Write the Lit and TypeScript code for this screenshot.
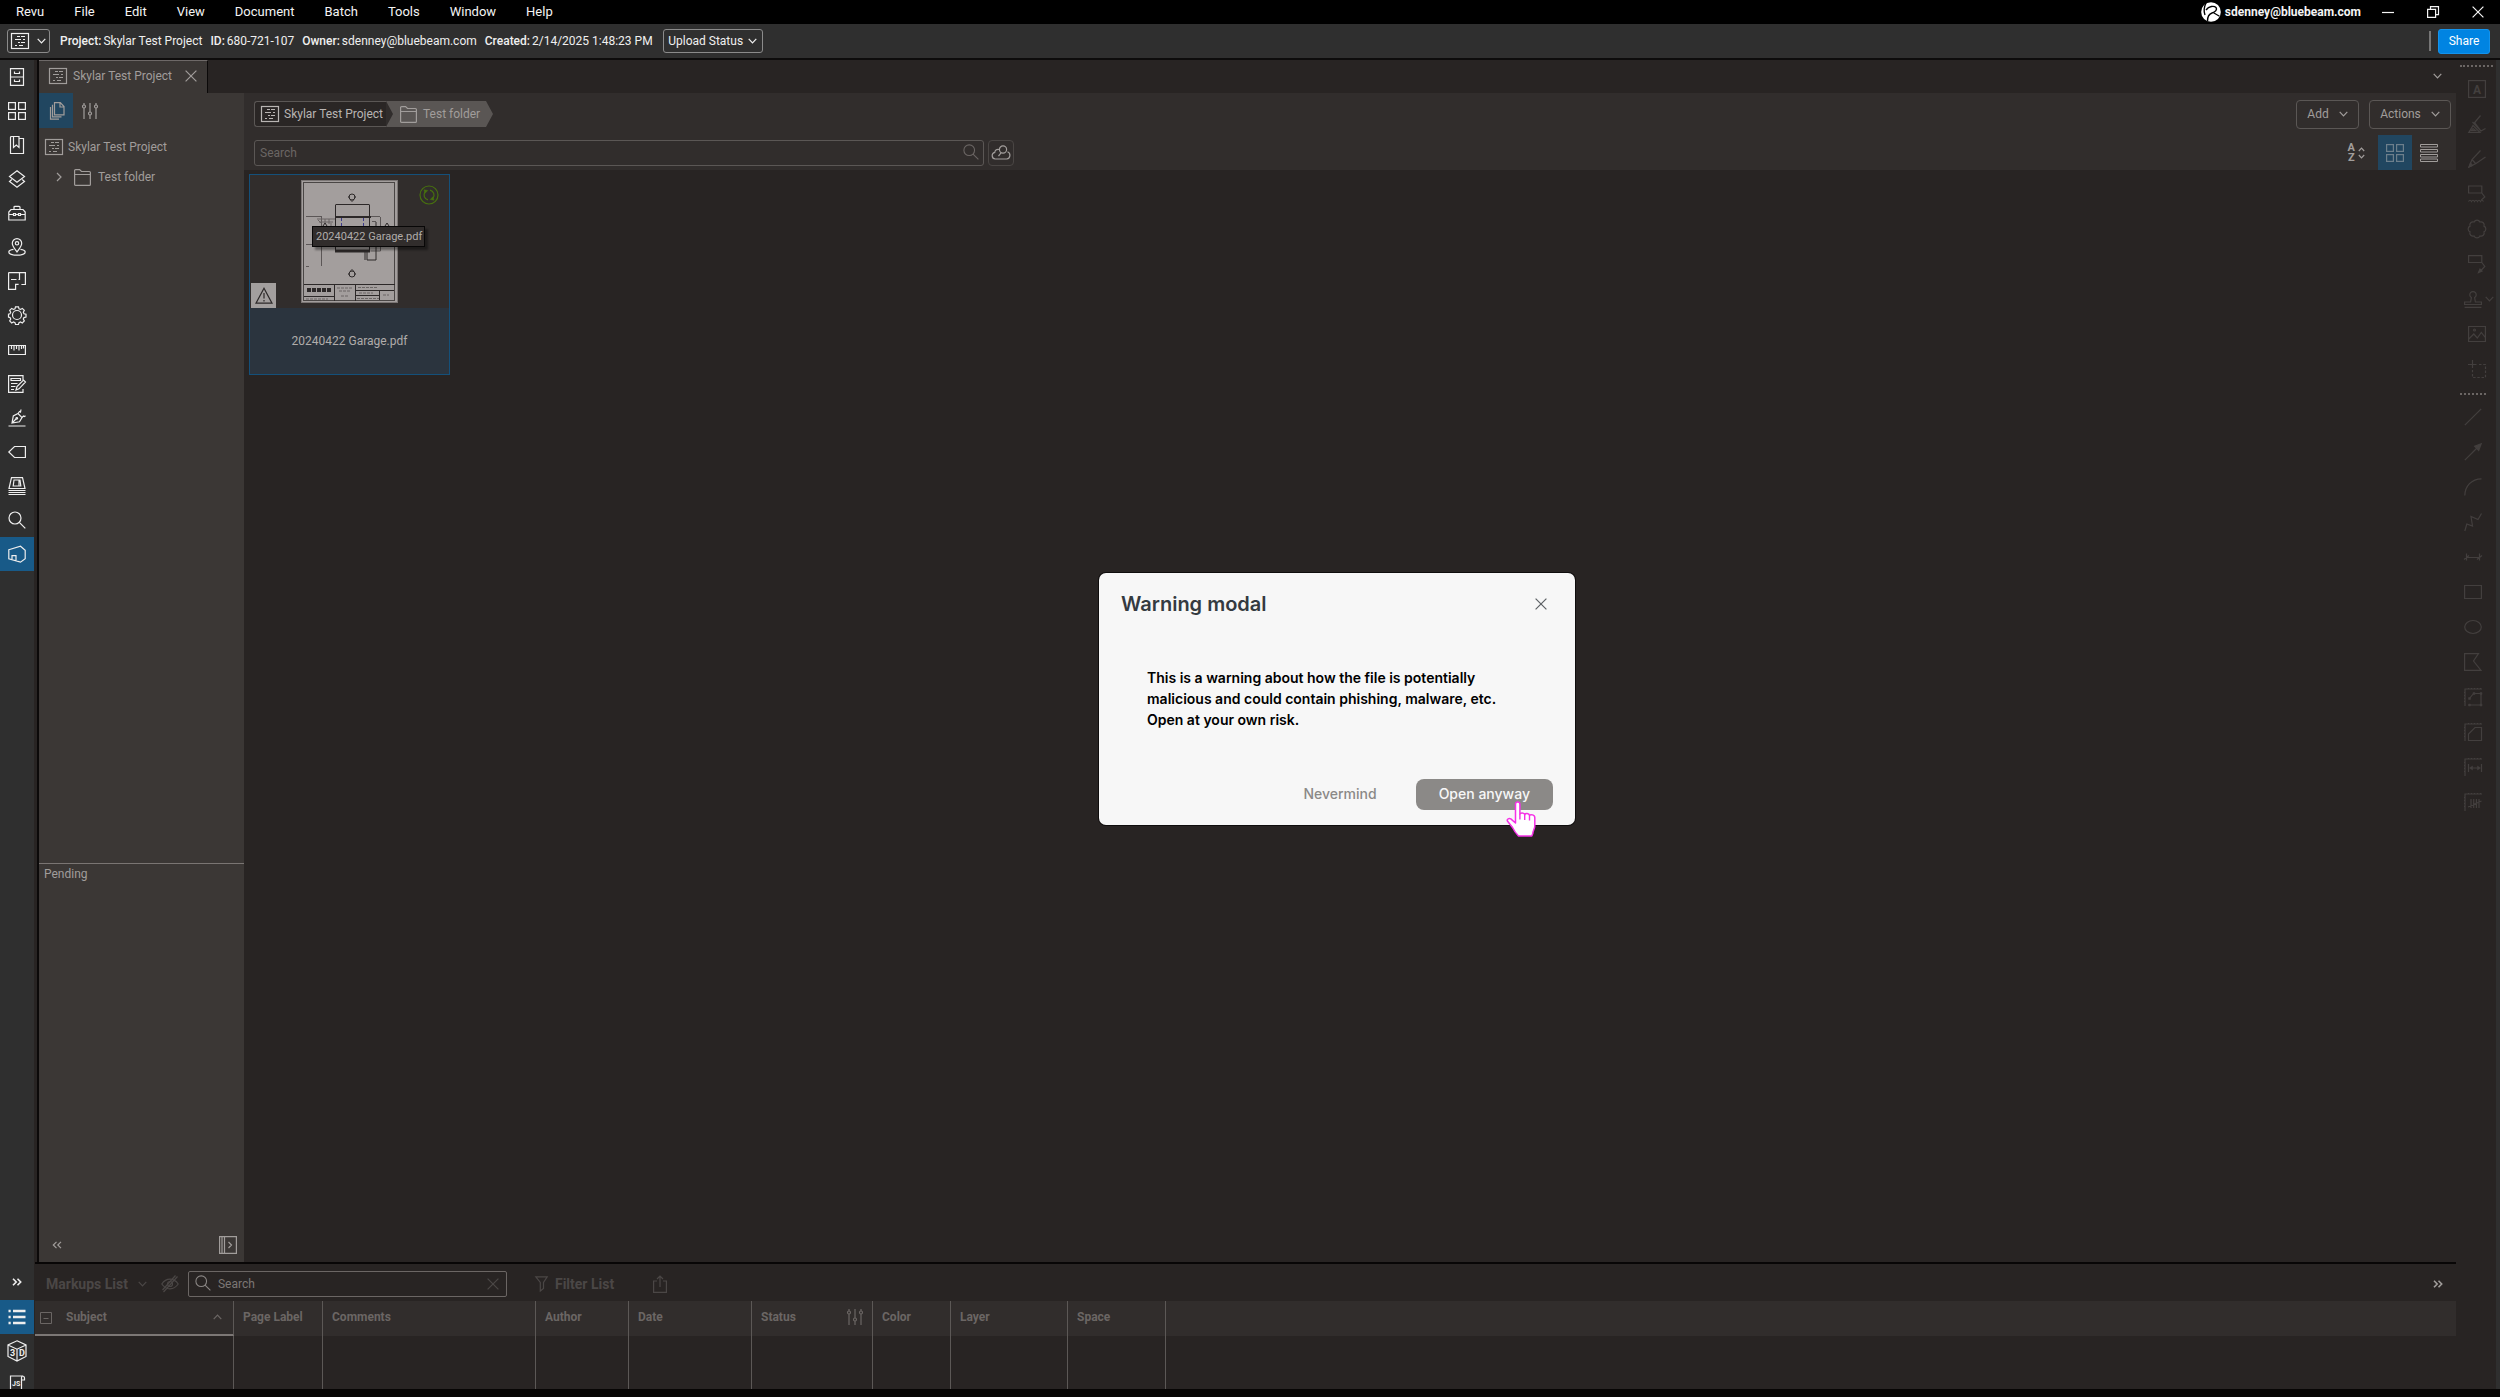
import { LitElement, html, css, svg, nothing } from "lit";
import type { SVGTemplateResult } from "lit";
import { customElement, property, state } from "lit/decorators.js";
import { classMap } from "lit/directives/class-map.js";

/* Line icons, each drawn on an 18 x 18 grid unless a box is given. */
type Glyph = { box?: [number, number]; art: SVGTemplateResult };

const AXES = svg`<path d="M1 18V1h17M0 4.500h1M0 7.500h1M0 10.500h1M0 13.500h1M4.500 0v1M7.500 0v1M10.500 0v1M13.500 0v1M16.500 0v1"/>`;

const GLYPHS: Record<string, Glyph> = {
  project: {
    box: [18, 16],
    art: svg`<rect x=".5" y=".5" width="17" height="15"/><path d="M6 3.500h3M10 3.500h4M4 6.500h6M12 6.500h2M7 9.500h2M10 9.500h4M4 12.500h2M8 12.500h4" stroke-width="1"/>`,
  },
  files: { art: svg`<path d="M2.500.6h13v16.800h-13zM2.500 9h13M6.500 3.500v2h5v-2M6.500 11.500v2h5v-2"/>` },
  grid: { art: svg`<rect x=".6" y=".6" width="6.800" height="6.800"/><rect x="10.600" y=".6" width="6.800" height="6.800"/><rect x=".6" y="10.600" width="6.800" height="6.800"/><rect x="10.600" y="10.600" width="6.800" height="6.800"/>` },
  bookmark: { art: svg`<path d="M11 2.500h4.500v15h-13V1.500q0-1 1-1H11v11L8.300 9l-2.800 2.500v-11"/>` },
  layers: { art: svg`<path d="M9 .8l7.500 5.700L9 12.200 1.500 6.500zM3.800 9.500L1.500 11.500 9 17.200l7.500-5.700-2.300-2"/>` },
  toolbox: { art: svg`<path d="M3 5.500h12l2.200 2.500v8H.8V8zM6 5.500V3.200Q6 2.300 7 2.300h4q1 0 1 .9v2.300M.8 10.500h4.700M7.500 10.500h3M12.500 10.500h4.700M5.500 9.500v2h2v-2zM10.500 9.500v2h2v-2z"/>` },
  place: { art: svg`<path d="M9 14C6.500 10.500 4.300 8.200 4.300 5.300a4.700 4.700 0 0 1 9.400 0C13.700 8.200 11.500 10.500 9 14z"/><circle cx="9" cy="5.300" r="1.700"/><path d="M5.500 11.300C2.500 11.700.8 12.700.8 14c0 1.800 3.600 3.200 8.200 3.200s8.200-1.400 8.200-3.200c0-1.300-1.700-2.300-4.700-2.700"/>` },
  spaces: { art: svg`<path d="M3 7.500h5.500M10.500 7.500h1v-7M.6.600h16.800v11.900h-4M.6.6v16.800h7v-5h3"/>` },
  gear: { art: svg`<circle cx="9" cy="9" r="4.500"/><path d="M7.500.8h3l.5 2 1.500.6 1.800-1 2 2-1 1.900.7 1.500 2 .4v2.900l-2 .5-.7 1.500 1 1.800-2 2-1.800-1-1.500.7-.5 1.900h-3L7 16.600l-1.500-.7-1.800 1-2-2 1-1.800L2 11.600l-1.500-.5V8.200L2 7.800l.7-1.500-1-1.900 2-2 1.800 1L7 2.800z"/>` },
  ruler: { art: svg`<path d="M.6 4.500h16.800v9H.6zM3.500 4.500V8M6 4.500v5M8.500 4.500V8M11 4.500v5M13.500 4.500V8M15.500 4.500v3"/>` },
  forms: { art: svg`<path d="M15 5V.6H.6v16.800H15V14M3 3.500h9.500v2H3zM3 8.500h6.500M3 11.500h4.500M3 14.500h3M8 15l1-3.500L15.500 5l2 2L11 13.800z"/>` },
  signature: { art: svg`<path d="M.5 17h17M4 14l1.300-7L10 4.500l4 4-2.500 4.300zM4 14l4.500-4.500M10 4.500l1.500-2 1 .5.500-2.500M14 8.500l1.500-1.500 1 .6 1-.8"/><circle cx="8.800" cy="9.300" r=".8"/>` },
  tag: { art: svg`<path d="M17.400 3.500v11H6.500L.8 9l5.700-5.500z"/>` },
  stack: { art: svg`<path d="M3.500.6h11l2.500 10.900H1zM6 3h6l.8 6H5.200zM11 3v6M.5 13.500h17M.5 15.500h17M.5 17.500h17"/>` },
  search: { art: svg`<circle cx="7" cy="7" r="6"/><path d="M11.300 11.300l6 6"/>` },
  studio: { art: svg`<path d="M.8 4.800L12.500 1.200l4.700 4v8.500l-4.700 3.500L.8 13.800zM4 14.500v-3.800h4v5"/>` },
  sliders: { box: [16, 16], art: svg`<path d="M2 0v2M2 5v11M8 0v9M8 12v4M14 0v2M14 5v11"/><circle cx="2" cy="3.500" r="1.500"/><circle cx="8" cy="10.500" r="1.500"/><circle cx="14" cy="3.500" r="1.500"/>` },
  pages: { box: [16, 18], art: svg`<path d="M5.500.6h5.800l3.700 4v8.200H5.500zM11 .6V5h4M3.500 2.800v12.100h9M1.500 5v12.200h8.500"/>` },
  folder: { box: [17, 17], art: svg`<path d="M.6 3V1.600q0-1 1-1h4L7.500 2.500h7.900q1 0 1 1v12q0 .9-1 .9H1.600q-1 0-1-.9zM.6 5.500h15.800"/>` },
  chevronDown: { box: [9, 6], art: svg`<path d="M.7.800L4.500 4.800 8.300.8"/>` },
  chevronUp: { box: [9, 6], art: svg`<path d="M.7 5.200L4.500 1.200 8.300 5.200"/>` },
  chevronRight: { box: [6, 10], art: svg`<path d="M1 1l4 4-4 4"/>` },
  doubleLeft: { box: [10, 8], art: svg`<path d="M4.500.8L1.300 4l3.200 3.200M9 .8L5.800 4 9 7.200"/>` },
  doubleRight: { box: [10, 8], art: svg`<path d="M1 .8L4.200 4 1 7.200M5.500.8L8.700 4 5.500 7.200"/>` },
  close: { box: [12, 12], art: svg`<path d="M.6.600l10.800 10.800M11.400.6L.6 11.400"/>` },
  dock: { art: svg`<path d="M.6.6h16.800v16.800H.6zM3 .6v16.800M5.500.6v16.800M9.500 6l3 3-3 3"/>` },
  cloudSearch: { box: [20, 15], art: svg`<path d="M8 4.500Q4 4 3.800 7.300A3.400 3.400 0 0 0 4.300 14h11.400a3.800 3.800 0 0 0 .8-7.300"/><circle cx="12" cy="4.500" r="3.600"/><path d="M10 7.800l-2.500 3.400"/>` },
  rows: { art: svg`<path d="M.5.5h17v2.500H.5zM.5 5.500h17V8H.5zM.5 10.500h17V13H.5zM.5 15h17v2.500H.5z" stroke-width="1"/>` },
  sortArrows: { box: [7, 12], art: svg`<path d="M.8 4L3.500 1.200 6.200 4M.8 8l2.700 2.800L6.200 8"/>` },
  sync: { box: [20, 20], art: svg`<circle cx="10" cy="10" r="9"/><path d="M6 7a5 5 0 0 0 3 7.900M14 13a5 5 0 0 0-3-7.900"/><path d="M5 4.800l3.800.7-3 3zM15 15.200l-3.800-.7 3-3z" fill="currentColor" stroke-width=".5"/>` },
  alert: { art: svg`<path d="M9 1.200l8 15H1zM9 6v5.500M9 13v1.500"/>` },
  list: { art: svg`<path d="M5 3h12.500M5 9h12.500M5 15h12.500M.5 3h2.200M.5 9h2.200M.5 15h2.200" stroke-width="2.400"/>` },
  model: {
    box: [20, 22],
    art: svg`<path d="M10 .8l9 4.200v11.500L10 21l-9-4.500V5zM1 5l9 4.200L19 5M10 9.200V21"/><g fill="currentColor" stroke="none" font-family="Roboto, sans-serif" font-weight="700" font-size="9"><text x="3" y="16">3</text><text x="12" y="16">D</text></g>`,
  },
  script: {
    box: [18, 20],
    art: svg`<path d="M2.500 14V1H14q2.500 0 2.500 2v2h-3V3q0-2 1.500-2M13.500 5v9"/><text x="4" y="11" fill="currentColor" stroke="none" font-family="Roboto, sans-serif" font-weight="700" font-size="7">JS</text>`,
  },
  hidden: { art: svg`<path d="M.8 9C3 5.800 5.800 4.200 9 4.200S15 5.800 17.200 9C15 12.200 12.200 13.800 9 13.800S3 12.200.8 9zM16.500 1.500L2.500 17M14.500.5L1.500 15"/><circle cx="9" cy="9" r="2.500"/>` },
  filter: { box: [13, 16], art: svg`<path d="M.8.8h11.400L8.500 6.500v6L5.300 15V6.500z"/>` },
  share: { box: [14, 18], art: svg`<path d="M4 6H.6v11.400h12.800V6H10M7 12V1M4 4l3-3 3 3"/>` },
  collapse: { box: [12, 12], art: svg`<path d="M.5.5h11v11H.5zM3.500 6.500h5" stroke-width="1"/>` },
  textBox: {
    art: svg`<rect x=".6" y=".6" width="16.800" height="16.800"/><text x="9" y="13.500" text-anchor="middle" fill="currentColor" stroke="none" font-family="Roboto, sans-serif" font-weight="700" font-size="12">A</text>`,
  },
  highlighter: { art: svg`<path d="M12.500.5L5.500 9M4.500 7l8.500 9M17.500 13.500l-4.500 2.500-6-8M5 10.500L.8 17.400H12zM5 13.500l-1.500 2h4z"/>` },
  pen: { art: svg`<path d="M12.500.5L4 9.500 1 17l7-3.500L17.500 7M4 9.500l3.500 4"/><path d="M1 17l1.500-4 2 2.500z" fill="currentColor"/>` },
  cloudNote: { art: svg`<path d="M.6 1h13.200v7H.6zM13.800 8l3 4-3.500 3M.5 16.500q1.500-2.500 3 0 1.500-2.500 3 0 1.500-2.500 3 0 1.500-2.500 3 0 1.500-2.500 3 0"/>` },
  cloud: { art: svg`<path d="M16 6.100a3.200 3.200 0 0 1 0 5.800 3.200 3.200 0 0 1-4.100 4.100 3.200 3.200 0 0 1-5.800 0A3.200 3.200 0 0 1 2 11.900a3.200 3.200 0 0 1 0-5.800A3.200 3.200 0 0 1 6.100 2a3.200 3.200 0 0 1 5.800 0A3.200 3.200 0 0 1 16 6.100z"/>` },
  callout: { art: svg`<path d="M.6.6h13.200v6.900H.6zM13.800 7.500l3 4-4.300 4.500"/><path d="M10.500 17.500l1.500-3.500 2 2z" fill="currentColor"/>` },
  stamp: { art: svg`<path d="M.6 12v2.500h16.800V12h-6l-.8-4.500a3.200 3.200 0 1 0-3.200 0L6.600 12zM.6 17.400h16.800"/>` },
  image: { art: svg`<path d="M.6 1.500h16.800v15H.6zM.8 14l5-5 3.500 4 4-5.500 4 5"/><circle cx="6.500" cy="5" r="1"/>` },
  snapshot: { art: svg`<path d="M4.500 0v8M0 4.500h8.500"/><path d="M11 4.500h6.500v13h-13V10" stroke-dasharray="2.500 1.700"/>` },
  line: { art: svg`<path d="M.8 17.200L17.200.8"/>` },
  arrow: { art: svg`<path d="M.8 17.200L13 5"/><path d="M17.200.8l-2.500 6.500-4-4z" fill="currentColor"/>` },
  arc: { art: svg`<path d="M.8 17.500C1 8 7.500 1 17.500.8"/>` },
  polyline: { art: svg`<path d="M.8 18l2-7 5.700 2L7 3.500l7 3L17.500.5"/>` },
  dimension: { art: svg`<path d="M2.500 9.500h13M2.500 5.500v7M15.500 5.500v7M0 11.500l5-4M13 11.500l5-4"/>` },
  rectangle: { art: svg`<path d="M.6 2.500h16.800v13H.6z"/>` },
  ellipse: { art: svg`<ellipse cx="9" cy="9" rx="8.300" ry="6.500"/>` },
  polygon: { art: svg`<path d="M.6.600h13.900L9.500 8l7.500 9.400H.6z"/>` },
  measureLength: { art: svg`${AXES}<path d="M5.500 10.500l4-5h7.500v11.500H5.500"/><path d="M4.500 9.500h2v2h-2zM9 4.500h2v2H9zM16 4.500h2v2h-2zM16 16h2v2h-2zM4.500 16h2v2h-2z" fill="currentColor" stroke-width=".5"/>` },
  measureArea: { art: svg`${AXES}<path d="M4.500 17.500V11L11 4.500h6.500v13z"/>` },
  measureWidth: { art: svg`${AXES}<path d="M4.500 6v8M17.500 6v8M6 10h10"/><path d="M5.500 10l3-2v4zM16.500 10l-3-2v4z" fill="currentColor" stroke-width=".5"/>` },
  measureCount: { art: svg`${AXES}<path d="M7 6v9M9.700 6v9M12.400 6v9M15 6v9M4 14l13.500-6"/>` },
  minimize: { box: [12, 12], art: svg`<path d="M0 6.500h12"/>` },
  restore: { box: [12, 12], art: svg`<path d="M.6 3.400h8v8h-8zM3.500 3V.6h8v8H9"/>` },
};

@customElement("line-icon")
export class LineIcon extends LitElement {
  @property() name = "close";
  @property({ type: Number }) weight = 1.2;
  @property({ type: Number }) scale = 1;

  static styles = css`
    :host {
      display: inline-flex;
      flex: none;
    }
    svg {
      display: block;
      fill: none;
      stroke: currentColor;
    }
  `;

  render() {
    const glyph = GLYPHS[this.name];
    if (!glyph) return nothing;
    const [w, h] = glyph.box ?? [18, 18];
    return html`<svg
      width=${w * this.scale}
      height=${h * this.scale}
      viewBox="0 0 ${w} ${h}"
      stroke-width=${this.weight}
      overflow="visible"
      aria-hidden="true"
    >
      ${glyph.art}
    </svg>`;
  }
}

/* Reduced view of the first drawing sheet. */
@customElement("sheet-thumbnail")
export class SheetThumbnail extends LitElement {
  static styles = css`
    :host {
      display: block;
    }
    svg {
      display: block;
    }
  `;

  render() {
    return html`<svg width="97" height="123" viewBox="0 0 97 123" fill="none" stroke="#2c2828" role="img" aria-label="Sheet preview">
      <rect width="97" height="123" fill="#a39e9d" stroke="none" />
      <rect x=".5" y=".5" width="96" height="122" stroke="#7b7675" />
      <rect x="2.500" y="2.500" width="91" height="118" stroke="#4a4645" />
      <path d="M34.500 24.500h34M34.500 25v47M68.500 25v47" />
      <path d="M34 37h36" stroke-width="2" />
      <path d="M34 71h35" stroke-width="3" />
      <path d="M5 36.500h16M20.500 37v49M5 64.500h16M5 86.500h3" stroke="#5b5656" />
      <path d="M16 39h18M18 42h14M24 39v5M28 39v5M30 43v5M17 40l3 3" stroke="#6a6564" />
      <path d="M40.500 38v9M62.500 38v9" stroke="#3d3a8a" stroke-dasharray="3 2" />
      <path d="M70 36.500h9M79.500 37v34h-10M71 41.500h4" stroke="#5b5656" />
      <path d="M66 72v8h9V42M64 71v9" />
      <path d="M26 46l-2-3-2 3M88 46l-2-3-2 3" />
      <circle cx="51" cy="17" r="3" />
      <path d="M47 17h2M53 17h2M49.500 20l1.500 1.500 1.500-1.500" />
      <circle cx="51" cy="94" r="3" />
      <path d="M47 94h2M53 94h2M49.500 91l1.500-1.500 1.500 1.500" />
      <path d="M3 104.500h91M33.500 105v16M54.500 105v16M55 110.500h38M78.500 111v9M3 116.500h30M55 115.500h23" />
      <path d="M6 110h24" stroke-width="4" stroke-dasharray="4 1" />
      <path d="M36 108h15M38 111h11M40 116h8M57 107.500h20M82 115h6M58 113h14M56 118.500h22M5 119h22" stroke="#6a6564" stroke-dasharray="3 1" />
    </svg>`;
  }
}

type Tool = { icon: string; label: string };

const MENUS = ["Revu", "File", "Edit", "View", "Document", "Batch", "Tools", "Window", "Help"];

const FACTS = [
  ["Project:", "Skylar Test Project"],
  ["ID:", "680-721-107"],
  ["Owner:", "sdenney@bluebeam.com"],
  ["Created:", "2/14/2025 1:48:23 PM"],
];

const PANELS: Tool[] = [
  { icon: "files", label: "File access" },
  { icon: "grid", label: "Thumbnails" },
  { icon: "bookmark", label: "Bookmarks" },
  { icon: "layers", label: "Layers" },
  { icon: "toolbox", label: "Tool chest" },
  { icon: "place", label: "Places" },
  { icon: "spaces", label: "Spaces" },
  { icon: "gear", label: "Properties" },
  { icon: "ruler", label: "Measurements" },
  { icon: "forms", label: "Forms" },
  { icon: "signature", label: "Signatures" },
  { icon: "tag", label: "Flags" },
  { icon: "stack", label: "Sets" },
  { icon: "search", label: "Search panel" },
  { icon: "studio", label: "Studio" },
];

const TEXT_TOOLS: Tool[] = [
  { icon: "textBox", label: "Text box" },
  { icon: "highlighter", label: "Highlight" },
  { icon: "pen", label: "Pen" },
  { icon: "cloudNote", label: "Cloud note" },
  { icon: "cloud", label: "Cloud" },
  { icon: "callout", label: "Callout" },
  { icon: "stamp", label: "Stamp" },
  { icon: "image", label: "Image" },
  { icon: "snapshot", label: "Snapshot" },
];

const SHAPE_TOOLS: Tool[] = [
  { icon: "line", label: "Line" },
  { icon: "arrow", label: "Arrow" },
  { icon: "arc", label: "Arc" },
  { icon: "polyline", label: "Polyline" },
  { icon: "dimension", label: "Dimension" },
  { icon: "rectangle", label: "Rectangle" },
  { icon: "ellipse", label: "Ellipse" },
  { icon: "polygon", label: "Polygon" },
  { icon: "measureLength", label: "Polylength" },
  { icon: "measureArea", label: "Area" },
  { icon: "measureWidth", label: "Length" },
  { icon: "measureCount", label: "Count" },
];

const COLUMNS = ["Subject", "Page Label", "Comments", "Author", "Date", "Status", "Color", "Layer", "Space", ""];

@customElement("app-root")
export class AppRoot extends LitElement {
  @state() private warningOpen = true;
  @state() private activePanel = "studio";

  static styles = css`
    :host {
      display: flex;
      flex-direction: column;
      position: relative;
      min-height: 100vh;
      box-sizing: border-box;
      background: #282423;
      color: #a19d9b;
      font: 12px/16px Roboto, "Liberation Sans", sans-serif;
    }
    *,
    *::before,
    *::after {
      box-sizing: border-box;
    }
    button,
    input {
      font: inherit;
      color: inherit;
      margin: 0;
      padding: 0;
      background: none;
      border: 0;
    }
    button {
      display: inline-flex;
      align-items: center;
      justify-content: center;
      cursor: pointer;
    }
    a {
      color: inherit;
      text-decoration: none;
    }

    /* Menu bar */
    .menubar {
      display: flex;
      align-items: center;
      height: 24px;
      padding: 0 16px;
      background: #000;
      color: #f4f4f4;
      font-size: 13px;
    }
    .menus {
      display: flex;
      gap: 30px;
      flex: 1;
    }
    .account {
      display: flex;
      align-items: center;
      gap: 4px;
      margin-right: 4px;
      font-size: 12px;
      font-weight: 700;
    }
    .window-buttons {
      display: flex;
      margin-right: -16px;
    }
    .window-buttons button {
      width: 45px;
      height: 24px;
    }

    /* Project bar */
    .projectbar {
      display: flex;
      align-items: center;
      height: 36px;
      padding: 0 10px 0 7px;
      background: #2f2f2f;
      border-bottom: 2px solid #0d0c0c;
      color: #f0f0f0;
    }
    .outlined {
      border: 1px solid #8b8b8b;
      border-radius: 3px;
      height: 24px;
    }
    .project-menu {
      width: 43px;
      gap: 8px;
    }
    .facts {
      display: flex;
      gap: 8px;
      margin: 0 10px;
      padding: 0;
      flex: none;
    }
    .fact {
      display: flex;
      gap: 2px;
    }
    .fact dt {
      font-weight: 500;
    }
    .fact dd {
      margin: 0;
    }
    .upload {
      width: 100px;
      gap: 5px;
    }
    .grip {
      width: 2px;
      height: 20px;
      margin: 0 7px 0 auto;
      background: #767676;
    }
    .share {
      width: 52px;
      height: 25px;
      border: 1px solid #1493ec;
      border-radius: 3px;
      background: #0084e2;
      color: #fff;
    }

    /* Work area */
    .work {
      display: flex;
      flex: 1;
      min-height: 0;
    }
    .rail {
      display: flex;
      flex-direction: column;
      flex: none;
      width: 34px;
      background: #2f2f2f;
      color: #eee;
    }
    .rail-tools {
      display: flex;
      flex-direction: column;
      justify-content: space-between;
      height: 511px;
    }
    .rail button {
      width: 34px;
      height: 34px;
    }
    .rail .on {
      background: #185a88;
    }
    .rail-bottom {
      display: flex;
      flex-direction: column;
      height: 125px;
      margin-top: auto;
      overflow: hidden;
    }
    .rail-bottom button {
      flex: none;
    }
    .rail-bottom button:first-child {
      height: 36px;
    }
    .center {
      display: flex;
      flex-direction: column;
      flex: 1;
      min-width: 0;
    }
    .document {
      display: flex;
      flex: 1;
      min-height: 0;
      padding-left: 3px;
    }
    .document-body {
      display: flex;
      flex-direction: column;
      flex: 1;
      border-left: 2px solid #0b0909;
    }

    /* Document tabs */
    .tabs {
      display: flex;
      align-items: center;
      height: 33px;
    }
    .tab {
      display: flex;
      align-items: center;
      align-self: stretch;
      width: 169px;
      padding: 0 10px 2px;
      gap: 6px;
      background: #3b3735;
      border-top: 1px solid #6e6968;
      border-right: 1px solid #0b0909;
    }
    .tab button {
      margin-left: auto;
    }
    .tab-overflow {
      margin: 0 14px 2px auto;
    }
    .columns {
      display: flex;
      flex: 1;
    }

    /* Project tree */
    .tree-panel {
      display: flex;
      flex-direction: column;
      flex: none;
      width: 205px;
      background: #3b3735;
    }
    .tree-tabs {
      display: flex;
      height: 35px;
    }
    .tree-tabs button {
      width: 34px;
    }
    .tree-tabs .on {
      padding-left: 2px;
      background: #214660;
    }
    .tree {
      list-style: none;
      margin: 0;
      padding: 4px 0 0 6px;
      flex: 0 0 735px;
    }
    .tree a {
      display: flex;
      align-items: center;
      height: 30px;
      gap: 5px;
    }
    .tree .child {
      padding-left: 11px;
      gap: 12px;
    }
    .tree .child span {
      margin-left: -5px;
    }
    .pending {
      flex: 1;
      border-top: 1px solid #7a7573;
      padding: 2px 5px;
    }
    .tree-footer {
      display: flex;
      align-items: center;
      justify-content: space-between;
      height: 34px;
      padding: 0 7px 0 13px;
    }

    /* Folder view */
    .folder {
      display: flex;
      flex-direction: column;
      flex: 1;
      min-width: 0;
    }
    .folder-bars {
      height: 77px;
      background: #312d2c;
      padding-left: 10px;
    }
    .bar {
      display: flex;
      align-items: center;
    }
    .bar.first {
      height: 42px;
      padding-right: 5px;
      gap: 10px;
    }
    .bar.second {
      height: 35px;
      padding-right: 10px;
    }
    .crumbs {
      display: flex;
      margin: 0 auto 0 0;
      height: 26px;
    }
    .crumb {
      display: flex;
      align-items: center;
      gap: 5px;
      height: 26px;
      color: #b9b5b3;
    }
    .crumb.root {
      width: 132px;
      padding-left: 6px;
      border: 1px solid #5b5755;
      border-right: 0;
      border-radius: 3px 0 0 3px;
      background: #2a2625;
    }
    .crumb.leaf {
      width: 107px;
      padding-left: 14px;
      gap: 6px;
      background: #5a5654;
      color: #a19d9b;
      clip-path: polygon(0 0, 100px 0, 107px 50%, 100px 100%, 0 100%, 7px 50%);
    }
    .soft {
      height: 29px;
      border: 1px solid #5b5755;
      border-radius: 4px;
      gap: 10px;
    }
    .soft.add {
      width: 63px;
    }
    .soft.actions {
      width: 82px;
    }
    .search {
      display: flex;
      align-items: center;
      width: 730px;
      height: 26px;
      padding: 0 4px 0 5px;
      border: 1px solid #5b5755;
      border-radius: 3px;
      color: #6b6664;
    }
    .search input {
      flex: 1;
      min-width: 0;
      outline: none;
    }
    .search input::placeholder,
    .markup-search input::placeholder {
      color: inherit;
      opacity: 1;
    }
    .cloud-search {
      width: 26px;
      height: 26px;
      margin: 0 auto 0 4px;
      border: 1px solid #4a4644;
      border-radius: 4px;
    }
    .sort {
      gap: 3px;
      margin-right: 13px;
    }
    .sort-letters {
      display: flex;
      flex-direction: column;
      font-size: 11px;
      line-height: 10px;
      font-weight: 700;
    }
    .view {
      width: 34px;
      height: 35px;
    }
    .view.on {
      background: #214660;
      color: #6d7f8c;
    }

    /* File cards */
    .files {
      display: flex;
      padding: 4px 5px;
    }
    .card {
      display: flex;
      flex-direction: column;
      position: relative;
      width: 201px;
      height: 201px;
      border: 1px solid #14507a;
      background: #2b343e;
      color: #b0acaa;
    }
    .card-art {
      display: flex;
      justify-content: center;
      height: 133px;
      padding-top: 5px;
      background: #312d2c;
    }
    .card-name {
      display: flex;
      align-items: center;
      justify-content: center;
      flex: 1;
    }
    .sync {
      position: absolute;
      right: 10px;
      top: 10px;
      color: #47700f;
    }
    .flag {
      display: flex;
      align-items: center;
      justify-content: center;
      position: absolute;
      left: 1px;
      top: 108px;
      width: 25px;
      height: 25px;
      background: #a39f9e;
      color: #2d2929;
    }
    .tooltip {
      position: absolute;
      left: 62px;
      top: 51px;
      height: 21px;
      padding: 0 2px 0 3px;
      border: 1px solid #080707;
      background: #312d2c;
      box-shadow: 3px 3px 2px rgba(0, 0, 0, 0.4);
      font-size: 11px;
      line-height: 19px;
      white-space: nowrap;
    }

    /* Markups list */
    .markups {
      display: flex;
      flex-direction: column;
      height: 127px;
      border-top: 2px solid #080606;
      margin-left: 1px;
      color: #6b6664;
    }
    .markup-bar {
      display: flex;
      align-items: center;
      height: 37px;
      padding: 2px 13px 0 11px;
      color: #4b4746;
      font-size: 14px;
      font-weight: 700;
    }
    .markup-title {
      gap: 10px;
      font-weight: 700;
    }
    .markup-eye {
      margin: 0 9px 0 14px;
    }
    .markup-search {
      display: flex;
      align-items: center;
      width: 319px;
      height: 26px;
      gap: 7px;
      padding: 0 7px 0 6px;
      border: 1px solid #6b6664;
      border-radius: 2px;
      font-size: 12px;
      font-weight: 400;
    }
    .markup-search input {
      flex: 1;
      min-width: 0;
      outline: none;
      color: #7c7775;
    }
    .bright {
      display: flex;
      color: #8b8785;
    }
    .markup-filter {
      gap: 7px;
      margin: 0 39px 0 28px;
      font-weight: 700;
    }
    .markup-more {
      margin-left: auto;
      color: #a19d9b;
    }
    .markup-table {
      width: 100%;
      flex: 1;
      table-layout: fixed;
      border-collapse: separate;
      border-spacing: 0;
    }
    .markup-table th {
      height: 35px;
      padding: 0 9px 3px;
      background: #312d2c;
      border-right: 1px solid #5c5856;
      text-align: left;
      font-weight: 700;
      vertical-align: middle;
    }
    .markup-table td {
      height: 53px;
      padding: 0;
      border-right: 1px solid #5c5856;
    }
    .markup-table th:last-child,
    .markup-table td:last-child {
      border-right: 0;
    }
    .markup-table th:first-child {
      padding: 0 11px 1px 5px;
      border-bottom: 2px solid #7c7775;
    }
    .heading {
      display: flex;
      align-items: center;
      gap: 14px;
      line-height: 16px;
    }
    .heading .end {
      margin-left: auto;
    }
    .heading .toggle {
      margin-top: 2px;
    }
    .w-subject { width: 199px; }
    .w-page { width: 89px; }
    .w-comments { width: 213px; }
    .w-author { width: 93px; }
    .w-date { width: 123px; }
    .w-status { width: 121px; }
    .w-color { width: 78px; }
    .w-layer { width: 117px; }
    .w-space { width: 98px; }

    /* Markup tools */
    .tools {
      display: flex;
      flex-direction: column;
      flex: none;
      width: 44px;
      padding: 5px 2px 0 4px;
      border-right: 4px solid #2f2f2f;
      color: #433f3e;
    }
    .dots {
      width: 33px;
      border-top: 2px dotted #6b6664;
    }
    .dots.short {
      width: 26px;
      margin-top: 7px;
    }
    .tool-group {
      display: flex;
      flex-direction: column;
      margin-top: 4px;
    }
    .tool-group button {
      width: 34px;
      height: 35px;
    }
    .tool-group.shapes button {
      width: 26px;
    }
    .tool-group .with-menu {
      gap: 3px;
      padding-left: 4px;
    }
    .statusbar {
      height: 8px;
      background: #070504;
    }

    /* Warning dialog */
    .dialog {
      position: absolute;
      left: calc(50% - 151px);
      top: calc(50% - 126px);
      display: flex;
      flex-direction: column;
      width: 476px;
      padding: 19px 22px 15px 22px;
      border-radius: 7px;
      background: #f7f7f7;
      box-shadow: 0 0 0 1px #0f0d0d;
      color: #000;
      font-family: Inter, "Liberation Sans", sans-serif;
    }
    .dialog-head {
      display: flex;
      align-items: center;
      justify-content: space-between;
      padding-right: 6px;
      color: #5d6165;
    }
    .dialog-head h2 {
      margin: 0;
      font-size: 20px;
      line-height: 24px;
      font-weight: 600;
      color: #343a40;
    }
    .dialog-text {
      margin: 51px 50px 49px 26px;
      font-size: 14px;
      line-height: 21px;
      font-weight: 600;
    }
    .dialog-actions {
      display: flex;
      justify-content: flex-end;
      gap: 16px;
      color: #8b8987;
      font-size: 14px;
      font-weight: 500;
    }
    .dialog-actions button {
      height: 31px;
      padding: 0 23px;
      border-radius: 8px;
      font-weight: 500;
    }
    .dialog-actions .confirm {
      background: #8b8987;
      color: #f7f7f7;
    }
    .pointer {
      position: absolute;
      right: 39px;
      bottom: -13px;
      pointer-events: none;
    }
  `;

  private tool(t: Tool) {
    const menu = t.icon === "stamp";
    return html`<button class=${classMap({ "with-menu": menu })} aria-label=${t.label}>
      <line-icon name=${t.icon}></line-icon>
      ${menu ? html`<line-icon name="chevronDown"></line-icon>` : nothing}
    </button>`;
  }

  private menubar() {
    return html`<header class="menubar">
      <nav class="menus">${MENUS.map((m) => html`<button>${m}</button>`)}</nav>
      <div class="account">
        <svg width="20" height="20" viewBox="0 0 20 20" aria-hidden="true">
          <circle cx="10" cy="10" r="9.800" fill="#fff" />
          <path d="M5 1C3 5 2.500 9 4 13M5 8C8 4 13 3.500 15 5.500c1.500 2-.5 4.500-4 5.500C8 12 6.500 14.500 6.500 19" fill="none" stroke="#000" stroke-width="1.400" />
          <path d="M12.500 10.800l6 3.500" fill="none" stroke="#000" stroke-width="1.300" />
        </svg>
        sdenney@bluebeam.com
      </div>
      <div class="window-buttons">
        <button aria-label="Minimize"><line-icon name="minimize"></line-icon></button>
        <button aria-label="Restore"><line-icon name="restore"></line-icon></button>
        <button aria-label="Close window"><line-icon name="close"></line-icon></button>
      </div>
    </header>`;
  }

  private projectbar() {
    return html`<div class="projectbar">
      <button class="outlined project-menu" aria-label="Project menu">
        <line-icon name="project"></line-icon><line-icon name="chevronDown"></line-icon>
      </button>
      <dl class="facts">
        ${FACTS.map(([k, v]) => html`<div class="fact"><dt>${k}</dt><dd>${v}</dd></div>`)}
      </dl>
      <button class="outlined upload">Upload Status <line-icon name="chevronDown"></line-icon></button>
      <span class="grip"></span>
      <button class="share">Share</button>
    </div>`;
  }

  private rail() {
    return html`<aside class="rail">
      <div class="rail-tools">
        ${PANELS.map(
          (p) => html`<button
            class=${classMap({ on: p.icon === this.activePanel })}
            aria-label=${p.label}
            @click=${() => (this.activePanel = p.icon)}
          >
            <line-icon name=${p.icon}></line-icon>
          </button>`,
        )}
      </div>
      <div class="rail-bottom">
        <button aria-label="Expand"><line-icon name="doubleRight" weight="1.6"></line-icon></button>
        <button class="on" aria-label="Markups"><line-icon name="list"></line-icon></button>
        <button aria-label="3D model"><line-icon name="model"></line-icon></button>
        <button aria-label="JavaScript"><line-icon name="script"></line-icon></button>
      </div>
    </aside>`;
  }

  private treePanel() {
    return html`<section class="tree-panel">
      <div class="tree-tabs">
        <button class="on" aria-label="Files"><line-icon name="pages"></line-icon></button>
        <button aria-label="Settings"><line-icon name="sliders"></line-icon></button>
      </div>
      <ul class="tree">
        <li><a href="#project"><line-icon name="project"></line-icon>Skylar Test Project</a></li>
        <li>
          <a class="child" href="#folder">
            <line-icon name="chevronRight"></line-icon><line-icon name="folder"></line-icon><span>Test folder</span>
          </a>
        </li>
      </ul>
      <div class="pending">Pending</div>
      <div class="tree-footer">
        <button aria-label="Collapse panel"><line-icon name="doubleLeft"></line-icon></button>
        <button aria-label="Dock panel"><line-icon name="dock"></line-icon></button>
      </div>
    </section>`;
  }

  private folderView() {
    return html`<main class="folder">
      <div class="folder-bars">
        <div class="bar first">
          <nav class="crumbs">
            <a class="crumb root" href="#project"><line-icon name="project"></line-icon>Skylar Test Project</a>
            <a class="crumb leaf" href="#folder"><line-icon name="folder"></line-icon>Test folder</a>
          </nav>
          <button class="soft add">Add <line-icon name="chevronDown"></line-icon></button>
          <button class="soft actions">Actions <line-icon name="chevronDown"></line-icon></button>
        </div>
        <div class="bar second">
          <div class="search">
            <input type="text" placeholder="Search" aria-label="Search files" />
            <line-icon name="search" scale="0.89"></line-icon>
          </div>
          <button class="cloud-search" aria-label="Search cloud"><line-icon name="cloudSearch"></line-icon></button>
          <button class="sort" aria-label="Sort by name">
            <span class="sort-letters"><span>A</span><span>Z</span></span>
            <line-icon name="sortArrows"></line-icon>
          </button>
          <button class="view on" aria-label="Grid view"><line-icon name="grid"></line-icon></button>
          <button class="view" aria-label="List view"><line-icon name="rows"></line-icon></button>
        </div>
      </div>
      <div class="files">
        <article class="card">
          <div class="card-art"><sheet-thumbnail></sheet-thumbnail></div>
          <div class="card-name">20240422 Garage.pdf</div>
          <line-icon class="sync" name="sync"></line-icon>
          <span class="flag"><line-icon name="alert"></line-icon></span>
          <span class="tooltip" role="tooltip">20240422 Garage.pdf</span>
        </article>
      </div>
    </main>`;
  }

  private heading(name: string) {
    if (name === "Subject") {
      return html`<div class="heading">
        <line-icon class="toggle" name="collapse"></line-icon>${name}<line-icon class="end" name="chevronUp"></line-icon>
      </div>`;
    }
    if (name === "Status") {
      return html`<div class="heading">${name}<line-icon class="end" name="sliders"></line-icon></div>`;
    }
    return name;
  }

  private markups() {
    return html`<section class="markups">
      <div class="markup-bar">
        <button class="markup-title">Markups List <line-icon name="chevronDown"></line-icon></button>
        <button class="markup-eye" aria-label="Hide markups"><line-icon name="hidden"></line-icon></button>
        <div class="markup-search">
          <span class="bright"><line-icon name="search" scale="0.89"></line-icon></span>
          <input type="text" placeholder="Search" aria-label="Search markups" />
          <button aria-label="Clear"><line-icon name="close"></line-icon></button>
        </div>
        <button class="markup-filter"><line-icon name="filter"></line-icon>Filter List</button>
        <button aria-label="Export"><line-icon name="share"></line-icon></button>
        <button class="markup-more" aria-label="More"><line-icon name="doubleRight" weight="1.6"></line-icon></button>
      </div>
      <table class="markup-table">
        <colgroup>
          <col class="w-subject" /><col class="w-page" /><col class="w-comments" /><col class="w-author" />
          <col class="w-date" /><col class="w-status" /><col class="w-color" /><col class="w-layer" />
          <col class="w-space" /><col />
        </colgroup>
        <thead>
          <tr>${COLUMNS.map((c) => html`<th scope="col">${this.heading(c)}</th>`)}</tr>
        </thead>
        <tbody>
          <tr>${COLUMNS.map(() => html`<td></td>`)}</tr>
        </tbody>
      </table>
    </section>`;
  }

  private dialog() {
    return html`<section class="dialog" role="dialog" aria-labelledby="warning-title">
      <div class="dialog-head">
        <h2 id="warning-title">Warning modal</h2>
        <button aria-label="Close" @click=${() => (this.warningOpen = false)}><line-icon name="close"></line-icon></button>
      </div>
      <p class="dialog-text">
        This is a warning about how the file is potentially malicious and could contain phishing, malware, etc. Open at
        your own risk.
      </p>
      <div class="dialog-actions">
        <button @click=${() => (this.warningOpen = false)}>Nevermind</button>
        <button class="confirm">Open anyway</button>
      </div>
      <svg class="pointer" width="30" height="37" viewBox="0 0 30 37" aria-hidden="true">
        <path
          d="M9.500 22V3.200a2.200 2.200 0 0 1 4.400 0V13c.6-1.500 4.300-1.500 4.800.6.800-1.600 4.300-1.300 4.800.8 1-1.300 5.300-.9 5.300 2.400V25c0 3-2 4.500-2 7.500l-1 2.500H12.500C10 32.500 8 29.500 6.500 26.500L1.600 20.300c-1.200-1.800 1.200-3.600 3.200-2.400z"
          fill="#fff" stroke="#f531e6" stroke-width="1.500" stroke-linejoin="round"
        />
        <path d="M13.900 13v5.500M18.700 13.600v5.400M23.500 14.400v5" fill="none" stroke="#f531e6" stroke-width="1.400" />
      </svg>
    </section>`;
  }

  render() {
    return html`
      ${this.menubar()} ${this.projectbar()}
      <div class="work">
        ${this.rail()}
        <div class="center">
          <div class="document">
            <div class="document-body">
              <div class="tabs">
                <div class="tab">
                  <line-icon name="project"></line-icon>Skylar Test Project
                  <button aria-label="Close tab"><line-icon name="close"></line-icon></button>
                </div>
                <button class="tab-overflow" aria-label="More tabs"><line-icon name="chevronDown"></line-icon></button>
              </div>
              <div class="columns">${this.treePanel()} ${this.folderView()}</div>
            </div>
          </div>
          ${this.markups()}
        </div>
        <aside class="tools">
          <div class="dots"></div>
          <div class="tool-group">${TEXT_TOOLS.map((t) => this.tool(t))}</div>
          <div class="dots short"></div>
          <div class="tool-group shapes">${SHAPE_TOOLS.map((t) => this.tool(t))}</div>
        </aside>
      </div>
      <footer class="statusbar"></footer>
      ${this.warningOpen ? this.dialog() : nothing}
    `;
  }
}
